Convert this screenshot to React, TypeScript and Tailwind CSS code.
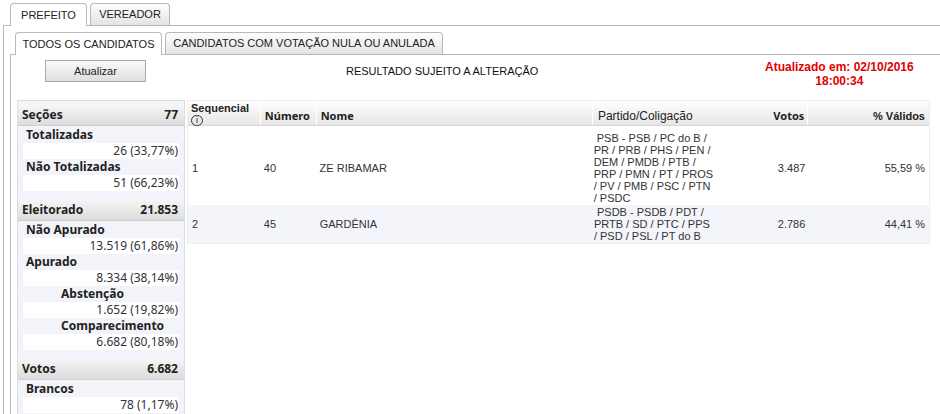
import React from "react";

type Row = { label: string; value: string; indent?: boolean };

const secoes: Row[] = [
  { label: "Totalizadas", value: "26 (33,77%)" },
  { label: "Não Totalizadas", value: "51 (66,23%)" },
];

const eleitorado: Row[] = [
  { label: "Não Apurado", value: "13.519 (61,86%)" },
  { label: "Apurado", value: "8.334 (38,14%)" },
  { label: "Abstenção", value: "1.652 (19,82%)", indent: true },
  { label: "Comparecimento", value: "6.682 (80,18%)", indent: true },
];

const votos: Row[] = [{ label: "Brancos", value: "78 (1,17%)" }];

const candidatos = [
  {
    seq: "1",
    numero: "40",
    nome: "ZE RIBAMAR",
    partido: [
      "\u00a0PSB - PSB / PC do B /",
      "PR / PRB / PHS / PEN /",
      "DEM / PMDB / PTB /",
      "PRP / PMN / PT / PROS",
      "/ PV / PMB / PSC / PTN",
      "/ PSDC",
    ],
    votos: "3.487",
    validos: "55,59 %",
  },
  {
    seq: "2",
    numero: "45",
    nome: "GARDÊNIA",
    partido: [
      "\u00a0PSDB - PSDB / PDT /",
      "PRTB / SD / PTC / PPS",
      "/ PSD / PSL / PT do B",
    ],
    votos: "2.786",
    validos: "44,41 %",
  },
];

function Tab({ label, active, width }: { label: string; active?: boolean; width: string }) {
  return (
    <div
      className={`${width} h-[22px] -mb-px flex items-center justify-center rounded-t-[4px] border border-b-0 border-[#b9b9b9] text-[11px] text-[#222] ${
        active ? "bg-white h-[23px]" : "bg-gradient-to-b from-[#fdfdfd] to-[#e4e4e4] border-b border-b-[#b9b9b9]"
      }`}
    >
      {label}
    </div>
  );
}

function Section({ title, value, rows }: { title: string; value: string; rows: Row[] }) {
  return (
    <div className="mb-[8px]">
      <div className="h-[22px] flex items-center justify-between pl-[4px] pr-[6px] bg-gradient-to-b from-[#f7f7f7] to-[#dcdcdc] border-b border-[#cfcfcf] font-bold text-[12px] text-[#222]">
        <span>{title}</span>
        <span>{value}</span>
      </div>
      <div className="pt-[1px]">
        {rows.map((r) => (
          <div key={r.label}>
            <div
              className={`h-[16px] leading-[16px] font-bold text-[12px] text-[#222] ${
                r.indent ? "pl-[43px]" : "pl-[8px]"
              }`}
            >
              {r.label}
            </div>
            <div className="h-[16px] leading-[16px] mx-[5px] pr-[1px] bg-white text-right text-[12px] text-[#333]">
              {r.value}
            </div>
          </div>
        ))}
      </div>
    </div>
  );
}

export default function App() {
  return (
    <div className="w-[940px] h-[414px] overflow-hidden bg-white font-['Liberation_Sans',Arial,sans-serif]">
      {/* outer tabs */}
      <div className="flex gap-[3px] pl-[10px] pt-[3px]">
        <Tab label="PREFEITO" active width="w-[77px]" />
        <Tab label="VEREADOR" width="w-[80px]" />
      </div>
      <div className="ml-[3px] border-l border-t border-[#b9b9b9] pt-[6px] pl-[6px]">
        {/* inner tabs */}
        <div className="flex gap-[3px] pl-[5px]">
          <Tab label="TODOS OS CANDIDATOS" active width="w-[147px]" />
          <Tab label="CANDIDATOS COM VOTAÇÃO NULA OU ANULADA" width="w-[278px]" />
        </div>
        <div className="border-l border-t border-[#b9b9b9] h-[400px]">
          {/* toolbar */}
          <div className="flex items-start pt-[5px] h-[45px]">
            <button className="ml-[34px] w-[101px] h-[22px] border border-[#a9a9a9] bg-gradient-to-b from-[#fafafa] to-[#dedede] text-[11px] text-[#222]">
              Atualizar
            </button>
            <div className="ml-[200px] leading-[22px] text-[11px] text-[#111]">
              RESULTADO SUJEITO A ALTERAÇÃO
            </div>
            <div className="ml-[216px] w-[170px] text-center text-[12px] leading-[14px] font-bold text-[#e10000]">
              <div>Atualizado em: 02/10/2016</div>
              <div>18:00:34</div>
            </div>
          </div>

          <div className="flex items-start">
            {/* sidebar */}
            <div className="ml-[6px] w-[168px] border border-[#d9dce3] bg-[#f2f4f9] pt-[3px] font-['Noto_Sans',sans-serif]">
              <Section title="Seções" value="77" rows={secoes} />
              <Section title="Eleitorado" value="21.853" rows={eleitorado} />
              <Section title="Votos" value="6.682" rows={votos} />
            </div>

            {/* results table */}
            <div className="ml-[2px] w-[743px] border border-[#eeeeee] text-[#333]">
              <div className="flex h-[25px] bg-gradient-to-b from-white to-[#e6e6e6] border-b border-[#d6d6d6]">
                <div className="w-[72px] pl-[3px] flex flex-col text-[11px] leading-[12px] text-[#222] pt-[1px]">
                  <span className="font-semibold">Sequencial</span>
                  <span className="mt-[1px] w-[12px] h-[12px] rounded-full border border-[#333] flex items-center justify-center text-[9px] leading-none">
                    i
                  </span>
                </div>
                <div className="w-[56px] pl-[4px] border-l border-white flex items-center pt-[6px] font-['Noto_Sans',sans-serif] font-bold text-[11px] text-[#222]">
                  Número
                </div>
                <div className="w-[277px] pl-[4px] border-l border-white flex items-center pt-[6px] font-['Noto_Sans',sans-serif] font-bold text-[11px] text-[#222]">
                  Nome
                </div>
                <div className="w-[121px] pl-[5px] border-l border-white flex items-center pt-[6px] text-[12px] text-[#222]">
                  Partido/Coligação
                </div>
                <div className="w-[95px] pr-[3px] flex items-center justify-end pt-[6px] font-['Noto_Sans',sans-serif] font-bold text-[11px] text-[#222]">
                  Votos
                </div>
                <div className="w-[122px] pr-[4px] border-l border-white flex items-center justify-end pt-[6px] font-bold text-[11px] text-[#222]">
                  % Válidos
                </div>
              </div>
              <div className="pt-[5px]">
                {candidatos.map((c, i) => (
                  <div
                    key={c.seq}
                    className={`flex items-center text-[11px] py-[1px] ${
                      i % 2 === 1 ? "bg-[#f3f5fa]" : "bg-white"
                    }`}
                  >
                    <div className="w-[72px] pl-[4px]">{c.seq}</div>
                    <div className="w-[56px] pl-[4px]">{c.numero}</div>
                    <div className="w-[277px] pl-[4px]">{c.nome}</div>
                    <div className="w-[121px] pl-[2px] leading-[12px] whitespace-nowrap">
                      {c.partido.map((p) => (
                        <div key={p}>{p}</div>
                      ))}
                    </div>
                    <div className="w-[95px] pr-[2px] text-right">{c.votos}</div>
                    <div className="w-[122px] pr-[4px] text-right">{c.validos}</div>
                  </div>
                ))}
              </div>
            </div>
          </div>
        </div>
      </div>
    </div>
  );
}
